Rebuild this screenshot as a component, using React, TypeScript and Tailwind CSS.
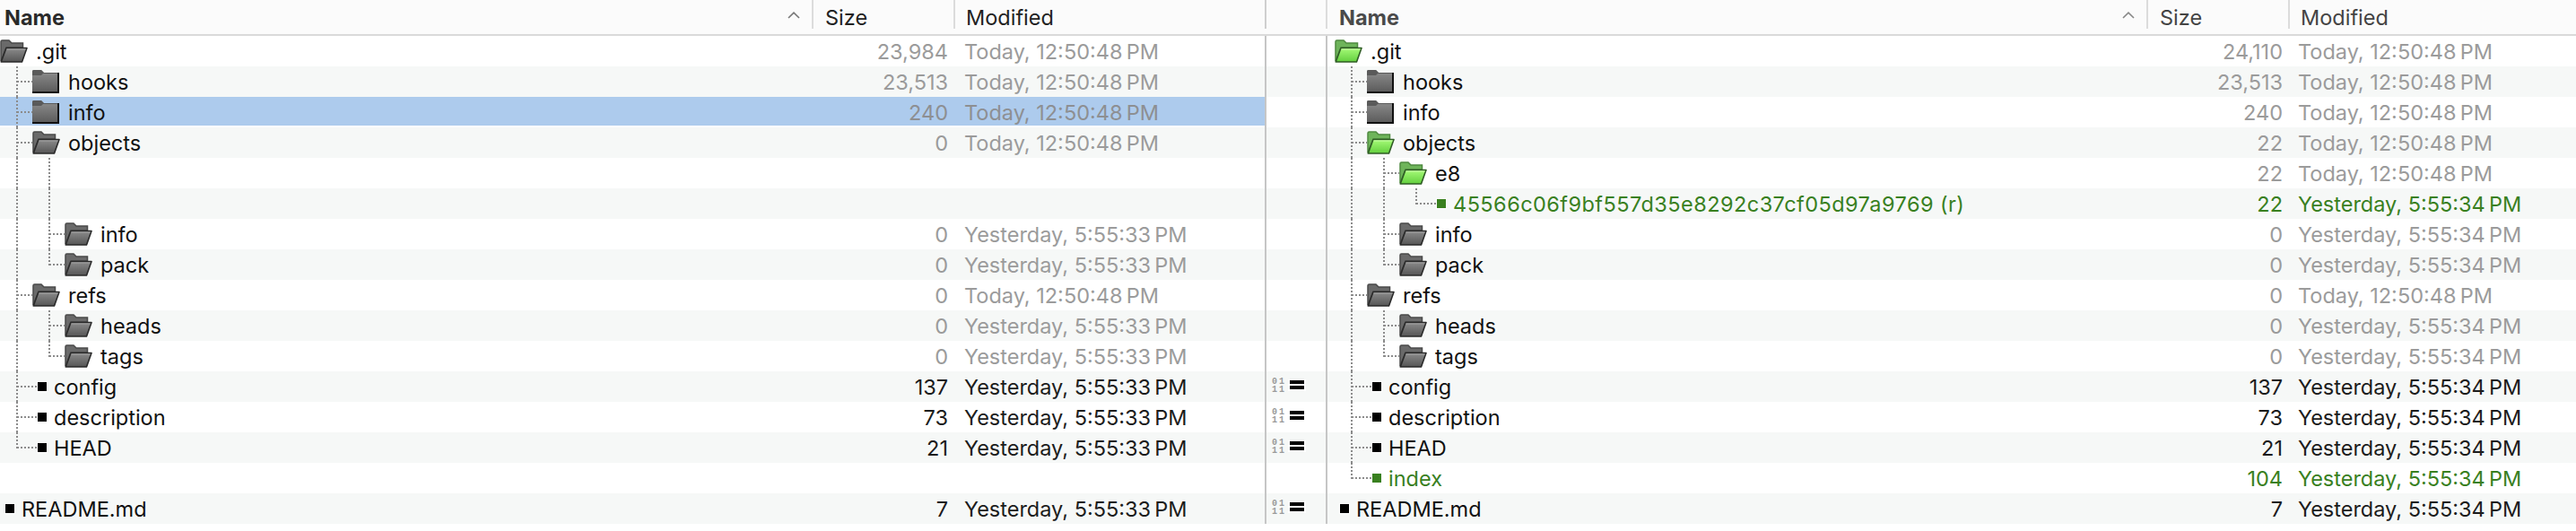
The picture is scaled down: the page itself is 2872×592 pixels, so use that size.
import { useId } from "react";

type Kind = "closed" | "open" | "file" | "none";
type Row = {
  name?: string;
  depth?: number;
  kind?: Kind;
  green?: boolean;
  nameGreen?: boolean;
  size?: string;
  date?: string;
  selected?: boolean;
  v?: number[];
  last?: number;
  elbow?: number;
};

const T = "Today, 12:50:48\u202fPM";
const Y3 = "Yesterday, 5:55:33\u202fPM";
const Y4 = "Yesterday, 5:55:34\u202fPM";

const left: Row[] = [
  { name: ".git", depth: 0, kind: "open", size: "23,984", date: T },
  { name: "hooks", depth: 1, kind: "closed", size: "23,513", date: T, v: [0], elbow: 1 },
  { name: "info", depth: 1, kind: "closed", size: "240", date: T, v: [0], elbow: 1, selected: true },
  { name: "objects", depth: 1, kind: "open", size: "0", date: T, v: [0], elbow: 1 },
  { v: [0, 1] },
  { v: [0, 1] },
  { name: "info", depth: 2, kind: "open", size: "0", date: Y3, v: [0, 1], elbow: 2 },
  { name: "pack", depth: 2, kind: "open", size: "0", date: Y3, v: [0], last: 1, elbow: 2 },
  { name: "refs", depth: 1, kind: "open", size: "0", date: T, v: [0], elbow: 1 },
  { name: "heads", depth: 2, kind: "open", size: "0", date: Y3, v: [0, 1], elbow: 2 },
  { name: "tags", depth: 2, kind: "open", size: "0", date: Y3, v: [0], last: 1, elbow: 2 },
  { name: "config", depth: 1, kind: "file", size: "137", date: Y3, v: [0], elbow: 1 },
  { name: "description", depth: 1, kind: "file", size: "73", date: Y3, v: [0], elbow: 1 },
  { name: "HEAD", depth: 1, kind: "file", size: "21", date: Y3, last: 0, elbow: 1 },
  {},
  { name: "README.md", depth: 0, kind: "file", size: "7", date: Y3 },
];

const right: Row[] = [
  { name: ".git", depth: 0, kind: "open", green: true, size: "24,110", date: T },
  { name: "hooks", depth: 1, kind: "closed", size: "23,513", date: T, v: [0], elbow: 1 },
  { name: "info", depth: 1, kind: "closed", size: "240", date: T, v: [0], elbow: 1 },
  { name: "objects", depth: 1, kind: "open", green: true, size: "22", date: T, v: [0], elbow: 1 },
  { name: "e8", depth: 2, kind: "open", green: true, size: "22", date: T, v: [0, 1], elbow: 2 },
  { name: "45566c06f9bf557d35e8292c37cf05d97a9769 (r)", depth: 3, kind: "file", nameGreen: true, size: "22", date: Y4, v: [0, 1], last: 2, elbow: 3 },
  { name: "info", depth: 2, kind: "open", size: "0", date: Y4, v: [0, 1], elbow: 2 },
  { name: "pack", depth: 2, kind: "open", size: "0", date: Y4, v: [0], last: 1, elbow: 2 },
  { name: "refs", depth: 1, kind: "open", size: "0", date: T, v: [0], elbow: 1 },
  { name: "heads", depth: 2, kind: "open", size: "0", date: Y4, v: [0, 1], elbow: 2 },
  { name: "tags", depth: 2, kind: "open", size: "0", date: Y4, v: [0], last: 1, elbow: 2 },
  { name: "config", depth: 1, kind: "file", size: "137", date: Y4, v: [0], elbow: 1 },
  { name: "description", depth: 1, kind: "file", size: "73", date: Y4, v: [0], elbow: 1 },
  { name: "HEAD", depth: 1, kind: "file", size: "21", date: Y4, v: [0], elbow: 1 },
  { name: "index", depth: 1, kind: "file", nameGreen: true, size: "104", date: Y4, last: 0, elbow: 1 },
  { name: "README.md", depth: 0, kind: "file", size: "7", date: Y4 },
];

const same = new Set([11, 12, 13, 15]);

function OpenFolder({ green }: { green?: boolean }) {
  const id = useId();
  const top = green ? "#a6fb78" : "#8c8c8c";
  const bottom = green ? "#63cf3e" : "#565656";
  const back = green ? "#6eb45a" : "#6a6a6a";
  const line = green ? "#2f5c25" : "#2a2a2a";
  return (
    <svg width="31" height="26" viewBox="0 0 31 26" className="shrink-0">
      <defs>
        <linearGradient id={id} x1="0" y1="0" x2="0" y2="1">
          <stop offset="0" stopColor={top} />
          <stop offset="1" stopColor={bottom} />
        </linearGradient>
      </defs>
      <path d="M1 24V2.5Q1 1 2.5 1H10L13 4H25.5V9H7L1 24Z" fill={back} stroke={green ? "#4f8a40" : "#4a4a4a"} strokeWidth="1.5" />
      <path d="M1.2 25L7 9.5H30L24.5 25Z" fill={`url(#${id})`} stroke={line} strokeWidth="1.6" strokeLinejoin="round" />
      <path d="M7.5 11H28.6" stroke={green ? "#c8ffa8" : "#a4a4a4"} strokeWidth="1" />
    </svg>
  );
}

function ClosedFolder() {
  const id = useId();
  return (
    <svg width="30" height="26" viewBox="0 0 30 26" className="shrink-0">
      <defs>
        <linearGradient id={id} x1="0" y1="0" x2="0" y2="1">
          <stop offset="0" stopColor="#909090" />
          <stop offset="1" stopColor="#585858" />
        </linearGradient>
      </defs>
      <path d="M0 26V1.5Q0 0 1.5 0H10L13 3H30V26Z" fill={`url(#${id})`} />
      <path d="M0 6V1.5Q0 0 1.5 0H10L13 3H28V4H12L10 6Z" fill="#5a5a5a" />
      <path d="M29 3V25H0" fill="none" stroke="#111" strokeWidth="2" />
    </svg>
  );
}

function TreeGuides({ row }: { row: Row }) {
  const x = (k: number) => 19 + 36 * k;
  const dash = { stroke: "#8c8c8c", strokeWidth: 2, strokeDasharray: "2 2", fill: "none" };
  return (
    <svg width="200" height="34" className="absolute left-0 top-0">
      {(row.v ?? []).map((k) => (
        <line key={k} x1={x(k)} x2={x(k)} y1={0} y2={34} {...dash} />
      ))}
      {row.last !== undefined && <line x1={x(row.last)} x2={x(row.last)} y1={0} y2={18} {...dash} />}
      {row.elbow !== undefined && (
        <line
          x1={x(row.elbow - 1)}
          x2={row.kind === "file" ? 6 + 36 * row.elbow : 36 * row.elbow}
          y1={17}
          y2={17}
          {...dash}
        />
      )}
    </svg>
  );
}

function NameCell({ row, width }: { row: Row; width: string }) {
  const d = row.depth ?? 0;
  const color = row.nameGreen ? "text-[#39801f]" : "text-[#111]";
  const spacing = d === 3 ? "tracking-[0.45px]" : "";
  return (
    <div className={`relative flex h-full shrink-0 items-center overflow-hidden ${width}`}>
      <TreeGuides row={row} />
      {row.kind && (
        <div className="relative flex items-center" style={{ marginLeft: 36 * d }}>
          {row.kind === "file" ? (
            <span className="ml-[5px] mr-[7px] border border-white">
              <span className={`block h-[10px] w-[10px] ${row.nameGreen ? "bg-[#39801f]" : "bg-black"}`} />
            </span>
          ) : (
            <span className="mr-[7px] flex w-[33px] items-center">
              {row.kind === "open" ? <OpenFolder green={row.green} /> : <ClosedFolder />}
            </span>
          )}
          <span className={`whitespace-nowrap pt-[2px] ${color} ${spacing}`}>{row.name}</span>
        </div>
      )}
    </div>
  );
}

function Cells({ row, sizeW, dateW }: { row: Row; sizeW: string; dateW: string }) {
  const color = row.nameGreen
    ? "text-[#39801f]"
    : row.kind === "file"
      ? "text-[#1c1c1c]"
      : row.selected
        ? "text-[#8d8f92]"
        : "text-[#9b9b9b]";
  return (
    <>
      <div className={`shrink-0 pr-[8px] pt-[2px] text-right ${sizeW} ${color}`}>{row.size}</div>
      <div className={`shrink-0 whitespace-nowrap pt-[2px] ${dateW} ${color}`}>{row.date}</div>
    </>
  );
}

function Sep() {
  return <span className="block h-[32px] w-[2px] bg-[#dcdcdc]" />;
}

function Chevron({ color }: { color: string }) {
  return (
    <svg width="14" height="8" viewBox="0 0 14 8" fill="none" className="shrink-0">
      <path d="M1 7L7 1.2L13 7" stroke={color} strokeWidth="1.6" />
    </svg>
  );
}

function HeaderPane({ dark, nameW, sizeW, dateW, pl }: { dark?: boolean; nameW: string; sizeW: string; dateW: string; pl: string }) {
  const strong = dark ? "text-[#2a2a2a]" : "text-[#4a4a4a]";
  const normal = dark ? "text-[#222]" : "text-[#444]";
  return (
    <div className="flex h-full">
      <div className={`flex items-start justify-between ${nameW} ${pl}`}>
        <span className={`mt-[3px] font-bold ${strong}`}>Name</span>
        <span className="flex items-start gap-[13px]">
          <span className="mt-[13px] block"><Chevron color={dark ? "#777" : "#888"} /></span>
          <Sep />
        </span>
      </div>
      <div className={`flex items-start justify-between ${sizeW}`}>
        <span className={`ml-[13px] mt-[3px] ${normal}`}>Size</span>
        <Sep />
      </div>
      <div className={dateW}>
        <span className={`ml-[12px] mt-[3px] inline-block ${normal}`}>Modified</span>
      </div>
    </div>
  );
}

function Gutter({ show }: { show: boolean }) {
  return (
    <div className="flex h-full w-[70px] shrink-0 border-x-2 border-[#c6c6c6] pl-[6px] pt-[7px]">
      {show && (
        <div className="flex items-start gap-[3px]">
          <div className="w-[15px] font-bold text-[#9a9a9a] text-[10px] leading-[9px] tracking-[2px] [font-family:'Liberation_Mono',monospace]">
            <div>01</div>
            <div>11</div>
          </div>
          <div className="mt-[2px] flex flex-col gap-[2px] bg-white p-[2px] pt-[1px]">
            <span className="block h-[4px] w-[16px] bg-black" />
            <span className="block h-[4px] w-[16px] bg-black" />
          </div>
        </div>
      )}
    </div>
  );
}

export default function App() {
  return (
    <div className="h-[592px] w-[2872px] overflow-hidden bg-white text-[23.5px] leading-[34px] [font-family:Inter,'Liberation_Sans',sans-serif]">
      <div className="flex h-[40px] border-b-2 border-[#dadada] bg-[#fbfbfb]">
        <div className="w-[1410px] shrink-0">
          <HeaderPane dark nameW="w-[907px]" sizeW="w-[158px]" dateW="w-[345px]" pl="pl-[5px]" />
        </div>
        <div className="flex h-[32px] w-[70px] shrink-0 justify-between">
          <span className="block h-full w-[2px] bg-[#cfcfcf]" />
          <span className="block h-full w-[2px] bg-[#dcdcdc]" />
        </div>
        <div className="flex-1">
          <HeaderPane nameW="w-[915px]" sizeW="w-[158px]" dateW="w-[319px]" pl="pl-[13px]" />
        </div>
      </div>
      {left.map((l, i) => {
        const r = right[i];
        return (
          <div key={i} className={`flex h-[34px] ${i % 2 === 1 ? "bg-[#f6f8f7]" : "bg-white"}`}>
            <div className="relative flex h-full w-[1410px] shrink-0 items-center">
              {l.selected && <div className="absolute inset-x-0 top-0 h-[32px] bg-[#adcbed]" />}
              <div className="relative flex h-full items-center">
                <NameCell row={l} width="w-[907px]" />
                <Cells row={l} sizeW="w-[158px]" dateW="w-[345px] pl-[10px]" />
              </div>
            </div>
            <Gutter show={same.has(i)} />
            <div className="flex h-full flex-1 items-center pl-[8px]">
              <NameCell row={r} width="w-[907px]" />
              <Cells row={r} sizeW="w-[158px]" dateW="w-[319px] pl-[9px]" />
            </div>
          </div>
        );
      })}
    </div>
  );
}
